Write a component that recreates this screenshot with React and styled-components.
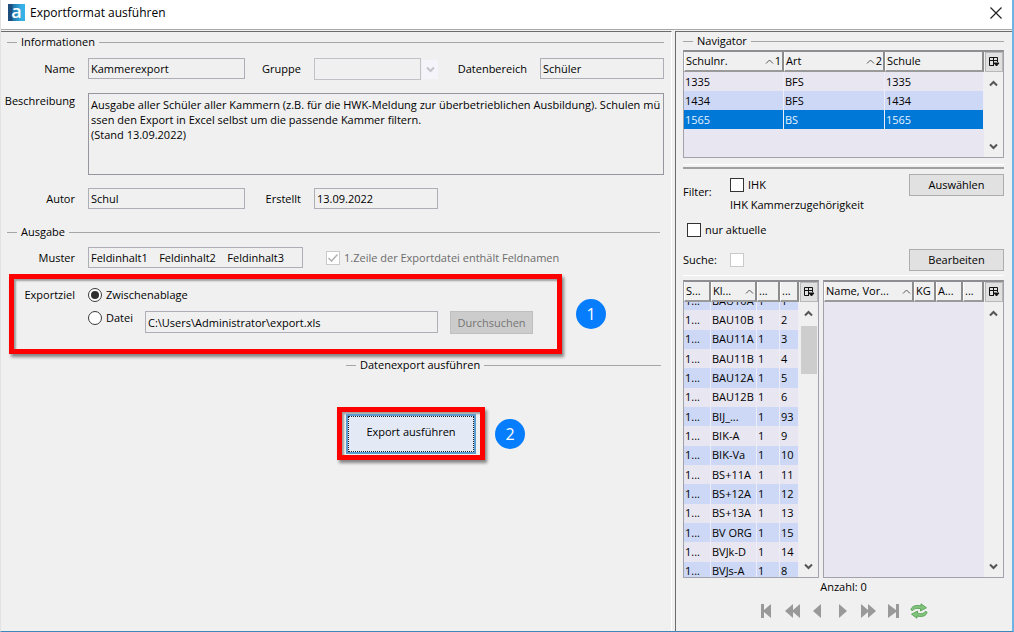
import React, { useLayoutEffect, useRef } from 'react';
import styled, { createGlobalStyle, css } from 'styled-components';

const GlobalStyle = createGlobalStyle`
  *, *::before, *::after { box-sizing: border-box; }
  body {
    margin: 0;
    background: #f0f0f0;
    color: #000;
    font: 11px/18px "Open Sans", "Noto Sans", sans-serif;
  }
  button, input, select, textarea { font: inherit; color: inherit; margin: 0; border-radius: 0; }
`;

/* ---------- window frame ---------- */

const Window = styled.div`
  display: flex;
  flex-direction: column;
  min-height: 100vh;
  border-right: 2px solid #6cb4e4;
  border-bottom: 1px solid #3f86b8;
  border-left: 1px solid #e2e2e2;
`;

const TitleBar = styled.header`
  display: flex;
  align-items: center;
  height: 30px;
  padding: 0 8px 4px 7px;
  background: #fff;
  border-bottom: 1px solid #a8a8a8;
`;

const Logo = styled.span`
  display: flex;
  align-items: center;
  justify-content: center;
  width: 17px;
  height: 17px;
  margin-right: 5px;
  padding-bottom: 4px;
  background: linear-gradient(90deg, #1d4e7e 0 22%, #2277ad 30%, #35b1e6 80%);
  color: #fff;
  font: 600 18px/18px "Open Sans", sans-serif;
`;

const Title = styled.h1`
  flex: 1;
  margin: 0;
  font-size: 12px;
  font-weight: 400;
`;

const CloseButton = styled.button`
  display: flex;
  padding: 2px;
  border: 0;
  background: none;
`;

const Content = styled.div`
  display: flex;
  flex: 1;
  gap: 3px;
  padding-top: 1px;
`;

const MainPanel = styled.main`
  flex: 1;
  min-width: 0;
  padding: 1px 7px 0 6px;
  border-top: 1px solid #6c6c6c;
  border-right: 1px solid #fff;
`;

const SidePanel = styled.aside`
  flex: 0 0 337px;
  padding: 0 8px 0 7px;
  border-top: 1px solid #6c6c6c;
  border-left: 1px solid #6c6c6c;
`;

/* ---------- shared parts ---------- */

const LegendRow = styled.div`
  display: flex;
  align-items: center;
  gap: 4px;
  height: 18px;
  margin: ${(p) => p.$margin || '0'};
  &::before, &::after { content: ''; height: 1px; background: #a6a6a6; }
  &::before { width: 10px; }
  &::after { flex: 1; }
`;

const LegendText = styled.h2`
  margin: 0;
  font-size: 11px;
  font-weight: 400;
`;

function Legend({ children, margin }) {
  return (
    <LegendRow $margin={margin}>
      <LegendText>{children}</LegendText>
    </LegendRow>
  );
}

const FormGrid = styled.div`
  display: grid;
  grid-template-columns: 68px 157px 43px 124px 76px 1fr;
  gap: 13px;
  margin-top: 7px;
`;

const Label = styled.label`
  justify-self: end;
  line-height: ${(p) => (p.$top ? 16 : 21)}px;
  white-space: nowrap;
`;

const TextInput = styled.input`
  width: 100%;
  min-width: 0;
  height: 21px;
  padding: 0 2px;
  border: 1px solid #aeaeb6;
  background: #f0f0f0;
  outline: none;
`;

const TextArea = styled.textarea`
  grid-column: 2 / -1;
  height: 82px;
  padding: 3px 1px 3px 2px;
  border: 1px solid #96969e;
  background: #f0f0f0;
  line-height: 15px;
  word-break: break-all;
  resize: none;
  outline: none;
  overflow: hidden;
`;

const SelectWrap = styled.div`
  display: flex;
  align-items: center;
  gap: 1px;
`;

const Select = styled.select`
  flex: 1;
  height: 22px;
  border: 1px solid #aeaeb6;
  background: #f0f0f0;
  appearance: none;
`;

const SelectArrow = styled.span`
  display: flex;
  align-items: center;
  justify-content: center;
  width: 16px;
  height: 19px;
  background: #f4f4fa;
`;

const CheckLabel = styled.label`
  display: flex;
  align-items: center;
  gap: 4px;
  height: 18px;
  margin: ${(p) => p.$margin || '0'};
  color: ${(p) => (p.$muted ? '#6c6c6c' : 'inherit')};
  white-space: nowrap;
`;

const BoxFrame = styled.span`
  position: relative;
  display: flex;
  svg { position: absolute; left: 1px; top: 2px; }
`;

const CheckInput = styled.input`
  appearance: none;
  width: 14px;
  height: 14px;
  border: 1px solid #333;
  background: #fff;
  &:disabled { border-color: #cacaca; }
`;

function CheckBox({ id, checked, disabled }) {
  return (
    <BoxFrame>
      <CheckInput id={id} type="checkbox" defaultChecked={checked} disabled={disabled} />
      {checked && (
        <svg width="12" height="10" viewBox="0 0 12 10" fill="none" stroke="#b4b4b4" strokeWidth="1.6">
          <path d="M1.5 5 L4.5 8 L10.5 1.5" />
        </svg>
      )}
    </BoxFrame>
  );
}

const RadioInput = styled.input`
  appearance: none;
  display: flex;
  flex: none;
  align-items: center;
  justify-content: center;
  width: 14px;
  height: 14px;
  border: 1px solid #3a3a3a;
  border-radius: 50%;
  background: #fff;
  &:checked::before {
    content: '';
    width: 8px;
    height: 8px;
    border-radius: 50%;
    background: #2e2e2e;
  }
`;

const Button = styled.button`
  height: 22px;
  padding: 0;
  border: 1px solid #adadad;
  background: #e1e1e1;
  &:disabled { color: #757575; background: #cccccc; border-color: #bfbfbf; }
`;

/* ---------- output section ---------- */

const SampleRow = styled.div`
  display: grid;
  grid-template-columns: 68px 215px 1fr;
  column-gap: 13px;
  margin-top: 6px;
`;

const StepRow = styled.div`
  display: flex;
  align-items: center;
  gap: ${(p) => p.$gap}px;
  margin: ${(p) => p.$margin};
`;

const redFrame = css`
  border: 5px solid #fd0000;
  box-shadow: 2px 3px 3px rgba(0, 0, 0, 0.45), inset 2px 2px 2px rgba(0, 0, 0, 0.35);
`;

const TargetFrame = styled.div`
  ${redFrame}
  display: grid;
  grid-template-columns: 61px 1fr;
  column-gap: 13px;
  width: 553px;
  height: 80px;
  padding-top: 7px;
`;

const TargetLabel = styled.span`
  justify-self: end;
`;

const TargetOptions = styled.div`
  display: grid;
  gap: 5px;
  align-content: start;
`;

const FileRow = styled.div`
  display: grid;
  grid-template-columns: 57px 293px 95px;
`;

const PathInput = styled(TextInput)`
  height: 22px;
  margin-top: 2px;
`;

const BrowseButton = styled(Button)`
  height: 23px;
  margin: 2px 0 0 12px;
`;

const ExportFrame = styled.div`
  ${redFrame}
  display: flex;
  align-items: center;
  justify-content: center;
  width: 148px;
  height: 53px;
`;

const ExportButton = styled.button`
  width: 130px;
  height: 40px;
  padding: 0 0 4px;
  border: 2px solid #5b9bd0;
  background: #e3e9f5;
  outline: 1px dotted #222;
  outline-offset: -3px;
`;

const Badge = styled.span`
  display: flex;
  align-items: center;
  justify-content: center;
  width: 30px;
  height: 30px;
  border-radius: 50%;
  background: #067dfc;
  color: #fff;
  font-size: 16px;
`;

/* ---------- navigator ---------- */

const TableFrame = styled.div`
  display: flex;
  min-width: 0;
  height: ${(p) => p.$height}px;
  border: 1px solid #a2a2aa;
  border-top: 2px solid #8e8e92;
  background: #e8e6f1;
`;

const TableView = styled.div`
  flex: 1;
  min-width: 0;
  overflow: hidden;
`;

const Table = styled.table`
  width: 100%;
  height: ${(p) => (p.$height ? `${p.$height}px` : 'auto')};
  table-layout: fixed;
  border-collapse: separate;
  border-spacing: 0;
`;

const HeadCell = styled.th`
  position: sticky;
  top: 0;
  z-index: 1;
  height: 20px;
  padding: 0 1px;
  border-right: 2px solid #8c8c8c;
  border-bottom: 2px solid #9a9a9a;
  border-left: 1px solid #fff;
  background: #f0f0f0;
  font-weight: 400;
  line-height: 18px;
  text-align: left;
  white-space: nowrap;
`;

const HeadInner = styled.span`
  display: flex;
  align-items: center;
  justify-content: space-between;
`;

const SortMark = styled.span`
  display: flex;
  align-items: center;
  gap: 1px;
`;

const Row = styled.tr`
  background: ${(p) => (p.$selected ? '#0078d7' : p.$even ? '#ccd8f5' : '#e8e6f1')};
  color: ${(p) => (p.$selected ? '#e6f3ff' : 'inherit')};
`;

const Cell = styled.td`
  height: 19px;
  padding: 0 1px;
  border-right: 1px solid #eeedf6;
  line-height: 18px;
  white-space: nowrap;
`;

const ScrollBar = styled.div`
  display: flex;
  flex-direction: column;
  align-items: center;
  width: 19px;
  background: #f0f0f0;
`;

const ColumnButton = styled.button`
  display: flex;
  align-items: center;
  justify-content: center;
  width: 18px;
  height: 20px;
  padding: 0;
  border: 1px solid #b8b8b8;
  background: #e0e0e0;
`;

const ArrowButton = styled.button`
  display: flex;
  align-items: center;
  justify-content: center;
  width: 17px;
  height: 22px;
  padding: 0;
  border: 0;
  background: none;
`;

const Thumb = styled.div`
  width: 16px;
  height: 48px;
  margin-top: 2px;
  background: #cdcdcd;
`;

const Spacer = styled.div`
  flex: 1;
`;

const Divider = styled.hr`
  height: ${(p) => (p.$thick ? 2 : 1)}px;
  margin: ${(p) => p.$margin};
  border: 0;
  background: ${(p) => (p.$thick ? '#a0a0a0' : '#fff')};
`;

const FilterGrid = styled.div`
  display: grid;
  grid-template-columns: 47px 1fr 95px;
  align-items: ${(p) => p.$align || 'center'};
  margin-top: ${(p) => p.$top}px;
`;

const FilterLabel = styled.span`
  padding-top: 9px;
`;

const FilterLines = styled.div`
  display: grid;
  gap: 2px;
  padding-top: 2px;
`;

const Lists = styled.div`
  display: grid;
  grid-template-columns: 136px 1fr;
  gap: 4px;
`;

const Count = styled.div`
  text-align: center;
`;

const Pager = styled.nav`
  display: flex;
  justify-content: center;
  align-items: center;
  gap: 9px;
  height: 30px;
`;

const PagerButton = styled.button`
  display: flex;
  padding: 0;
  border: 0;
  background: none;
`;

function Chevron({ up, color = '#555', thin }) {
  return (
    <svg width="9" height="7" viewBox="0 0 9 7" fill="none" stroke={color} strokeWidth={thin ? 1 : 2}>
      <path d={up ? 'M1 5.5 L4.5 2 L8 5.5' : 'M1 1.5 L4.5 5 L8 1.5'} />
    </svg>
  );
}

function TableTools({ thumb }) {
  return (
    <ScrollBar>
      <ColumnButton aria-label="Spalten">
        <svg width="12" height="12" viewBox="0 0 12 12" fill="none" stroke="#111">
          <path d="M6 9.5 H1.5 V1.5 H9.5 V6 M1.5 4.5 H9.5 M5.5 1.5 V9.5" />
          <path d="M6 7 H11 L8.5 10 Z" fill="#111" />
        </svg>
      </ColumnButton>
      <ArrowButton aria-label="Nach oben"><Chevron up /></ArrowButton>
      {thumb && <Thumb />}
      <Spacer />
      <ArrowButton aria-label="Nach unten"><Chevron /></ArrowButton>
    </ScrollBar>
  );
}

function DataTable({ height, columns, rows, selected, tableHeight, scroll = 0, thumb }) {
  const view = useRef(null);
  useLayoutEffect(() => {
    view.current.scrollTop = scroll;
  }, [scroll]);
  return (
    <TableFrame $height={height}>
      <TableView ref={view}>
        <Table $height={tableHeight}>
          <colgroup>
            {columns.map((c, i) => <col key={i} width={c.width} />)}
          </colgroup>
          <thead>
            <tr>
              {columns.map((c, i) => (
                <HeadCell key={i}>
                  <HeadInner>
                    {c.title}
                    {c.sort !== undefined && <SortMark><Chevron up thin />{c.sort}</SortMark>}
                  </HeadInner>
                </HeadCell>
              ))}
            </tr>
          </thead>
          <tbody>
            {rows.map((r, i) => (
              <Row key={i} $even={scroll ? i % 2 === 0 : i % 2 === 1} $selected={i === selected}>
                {r.map((v, j) => <Cell key={j}>{v}</Cell>)}
              </Row>
            ))}
          </tbody>
        </Table>
      </TableView>
      <TableTools thumb={thumb} />
    </TableFrame>
  );
}

const schoolColumns = [
  { title: 'Schulnr.', width: 100, sort: '1' },
  { title: 'Art', width: 101, sort: '2' },
  { title: 'Schule' },
];
const schools = [
  ['1335', 'BFS', '1335'],
  ['1434', 'BFS', '1434'],
  ['1565', 'BS', '1565'],
];

const classColumns = [
  { title: 'S...', width: 27 },
  { title: 'Kl...', width: 46, sort: '' },
  { title: '...', width: 23 },
  { title: '...' },
];
const classes = [
  ['BAU10A', '1'], ['BAU10B', '2'], ['BAU11A', '3'], ['BAU11B', '4'], ['BAU12A', '5'],
  ['BAU12B', '6'], ['BIJ_...', '93'], ['BIK-A', '9'], ['BIK-Va', '10'], ['BS+11A', '11'],
  ['BS+12A', '12'], ['BS+13A', '13'], ['BV ORG', '15'], ['BVJk-D', '14'], ['BVJs-A', '8'],
].map(([name, nr]) => ['1...', name, '1', nr]);

const personColumns = [
  { title: 'Name, Vor...', width: 90, sort: '' },
  { title: 'KG', width: 22 },
  { title: 'A...', width: 27 },
  { title: '...' },
];

const pagerIcons = [
  ['Anfang', 'M1 1 H4 V7 L11 1 V15 L4 9 V15 H1 Z'],
  ['Zurückblättern', 'M8 1 V7 L15 1 V15 L8 9 V15 L0 8 Z'],
  ['Zurück', 'M11 1 V15 L3 8 Z'],
  ['Weiter', 'M4 1 V15 L12 8 Z'],
  ['Vorblättern', 'M8 1 V7 L1 1 V15 L8 9 V15 L16 8 Z'],
  ['Ende', 'M14 1 H11 V7 L3 1 V15 L11 9 V15 H14 Z'],
];

const description = `Ausgabe aller Schüler aller Kammern (z.B. für die HWK-Meldung zur überbetrieblichen Ausbildung). Schulen mü
ssen den Export in Excel selbst um die passende Kammer filtern.
(Stand 13.09.2022)`;

export default function App() {
  return (
    <>
      <GlobalStyle />
      <Window>
        <TitleBar>
          <Logo aria-hidden="true">a</Logo>
          <Title>Exportformat ausführen</Title>
          <CloseButton aria-label="Schließen">
            <svg width="12" height="12" viewBox="0 0 12 12" stroke="#222" strokeWidth="1.2">
              <path d="M0.5 0.5 L11.5 11.5 M11.5 0.5 L0.5 11.5" />
            </svg>
          </CloseButton>
        </TitleBar>
        <Content>
          <MainPanel>
            <Legend>Informationen</Legend>
            <FormGrid>
              <Label htmlFor="name">Name</Label>
              <TextInput id="name" readOnly value="Kammerexport" />
              <Label htmlFor="gruppe">Gruppe</Label>
              <SelectWrap>
                <Select id="gruppe" disabled><option /></Select>
                <SelectArrow><Chevron color="#c4c4cc" /></SelectArrow>
              </SelectWrap>
              <Label htmlFor="bereich">Datenbereich</Label>
              <TextInput id="bereich" readOnly value="Schüler" />
              <Label htmlFor="beschreibung" $top>Beschreibung</Label>
              <TextArea id="beschreibung" readOnly value={description} />
              <Label htmlFor="autor">Autor</Label>
              <TextInput id="autor" readOnly value="Schul" />
              <Label htmlFor="erstellt">Erstellt</Label>
              <TextInput id="erstellt" readOnly value="13.09.2022" />
            </FormGrid>

            <Legend margin="14px 4px 0 0">Ausgabe</Legend>
            <SampleRow>
              <Label htmlFor="muster">Muster</Label>
              <TextInput id="muster" readOnly value="Feldinhalt1    Feldinhalt2    Feldinhalt3" />
              <CheckLabel htmlFor="kopf" $muted $margin="2px 0 0 10px">
                <CheckBox id="kopf" checked disabled />
                1.Zeile der Exportdatei enthält Feldnamen
              </CheckLabel>
            </SampleRow>

            <StepRow $gap={14} $margin="6px 0 0 2px">
              <TargetFrame role="radiogroup" aria-labelledby="ziel">
                <TargetLabel id="ziel">Exportziel</TargetLabel>
                <TargetOptions>
                  <CheckLabel htmlFor="zwischen">
                    <RadioInput id="zwischen" type="radio" name="ziel" defaultChecked />
                    Zwischenablage
                  </CheckLabel>
                  <FileRow>
                    <CheckLabel htmlFor="datei">
                      <RadioInput id="datei" type="radio" name="ziel" />
                      Datei
                    </CheckLabel>
                    <PathInput aria-label="Dateipfad" readOnly value="C:\Users\Administrator\export.xls" />
                    <BrowseButton disabled>Durchsuchen</BrowseButton>
                  </FileRow>
                </TargetOptions>
              </TargetFrame>
              <Badge>1</Badge>
            </StepRow>

            <Legend margin="2px 3px 0 339px">Datenexport ausführen</Legend>
            <StepRow $gap={10} $margin="33px 0 0 330px">
              <ExportFrame>
                <ExportButton>Export ausführen</ExportButton>
              </ExportFrame>
              <Badge>2</Badge>
            </StepRow>
          </MainPanel>

          <SidePanel>
            <Legend>Navigator</Legend>
            <DataTable height={108} columns={schoolColumns} rows={schools} selected={2} />
            <Divider $margin="6px 0 0" />
            <Divider $thick $margin="2px 0 0" />

            <FilterGrid $top={5} $align="start">
              <FilterLabel>Filter:</FilterLabel>
              <FilterLines>
                <CheckLabel htmlFor="ihk"><CheckBox id="ihk" />IHK</CheckLabel>
                <span>IHK Kammerzugehörigkeit</span>
              </FilterLines>
              <Button>Auswählen</Button>
            </FilterGrid>
            <CheckLabel htmlFor="aktuell" $margin="7px 0 0 4px">
              <CheckBox id="aktuell" />nur aktuelle
            </CheckLabel>
            <FilterGrid $top={10}>
              <label htmlFor="suche">Suche:</label>
              <CheckBox id="suche" disabled />
              <Button>Bearbeiten</Button>
            </FilterGrid>
            <Divider $margin="4px 0" />

            <Lists>
              <DataTable
                height={298}
                columns={classColumns}
                rows={classes}
                tableHeight={310}
                scroll={11}
                thumb
              />
              <DataTable height={298} columns={personColumns} rows={[]} />
            </Lists>
            <Count>Anzahl: 0</Count>
            <Pager>
              {pagerIcons.map(([name, d]) => (
                <PagerButton key={name} aria-label={name}>
                  <svg width="16" height="16" viewBox="0 0 16 16" fill="#999"><path d={d} /></svg>
                </PagerButton>
              ))}
              <PagerButton aria-label="Aktualisieren">
                <svg width="18" height="16" viewBox="0 0 18 16" fill="#83c47d" stroke="#4b9a4c" strokeWidth="0.8">
                  <path d="M1 7 C1 3.5 5.5 1.5 11 3 L11 0.8 L16.5 4.8 L10.5 8 L10.5 5.8 C7 4.8 4 5.2 2.8 7.6 Z" />
                  <path d="M17 9 C17 12.5 12.5 14.5 7 13 L7 15.2 L1.5 11.2 L7.5 8 L7.5 10.2 C11 11.2 14 10.8 15.2 8.4 Z" />
                </svg>
              </PagerButton>
            </Pager>
          </SidePanel>
        </Content>
      </Window>
    </>
  );
}
